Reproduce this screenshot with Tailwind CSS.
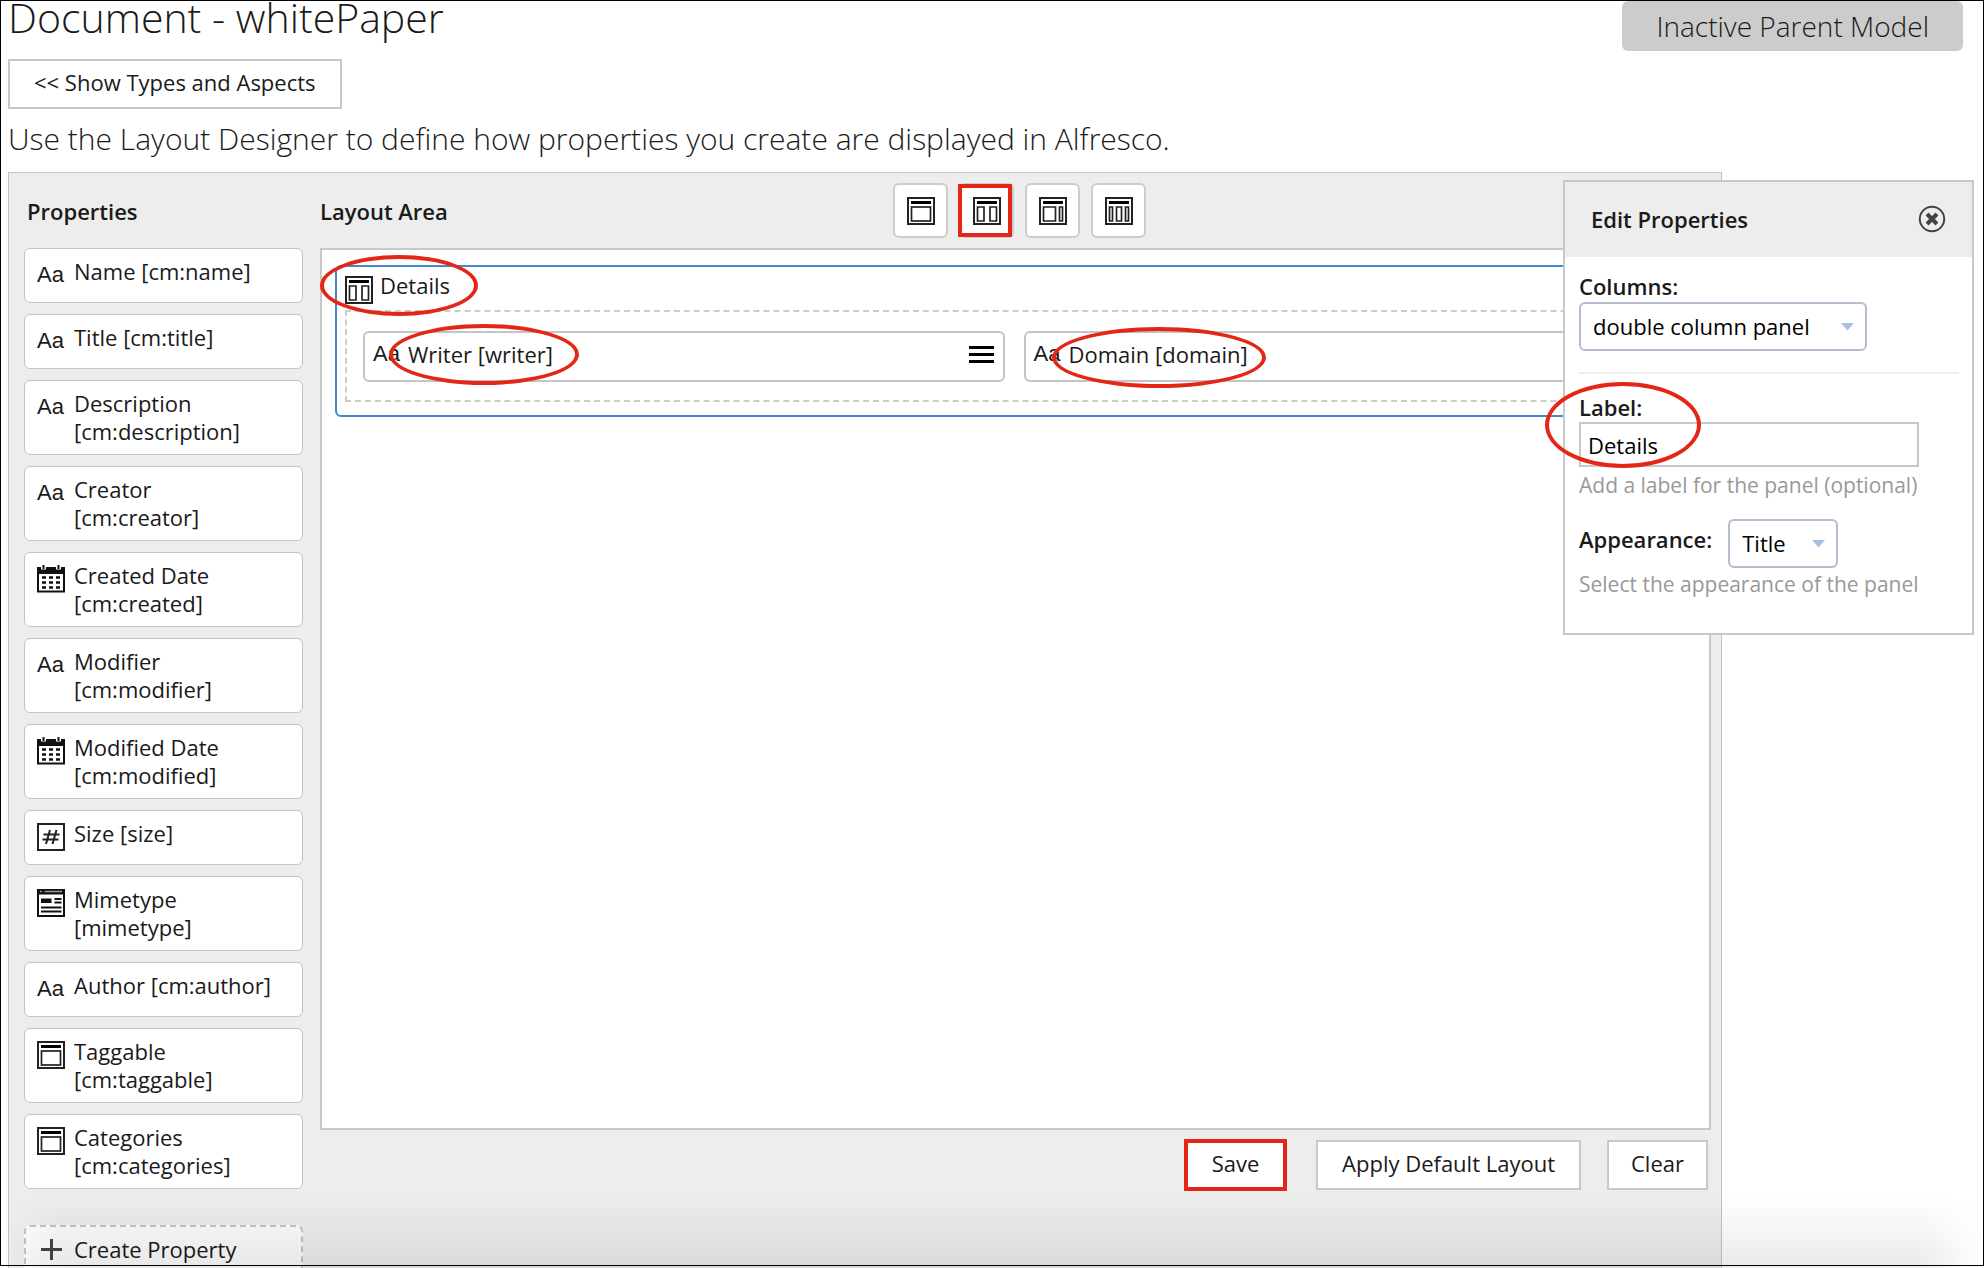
<!DOCTYPE html>
<html lang="en">
<head>
<meta charset="utf-8">
<title>Layout Designer</title>
<script src="https://cdn.jsdelivr.net/npm/@tailwindcss/browser@4"></script>
</head>
<body class="bg-white font-['Open_Sans',sans-serif] text-[22px] leading-7 text-[#1a1a1a]">

<svg class="hidden" aria-hidden="true">
  <symbol id="panel-frame" viewBox="0 0 28 28">
    <rect x="1" y="1" width="26" height="26" fill="#fff" stroke="#222" stroke-width="2"/>
    <path d="M4 5.500H24" stroke="#000" stroke-width="3"/>
  </symbol>
  <symbol id="single" viewBox="0 0 28 28">
    <use href="#panel-frame"/>
    <rect x="4.500" y="10" width="19" height="14" fill="none" stroke="#222" stroke-width="1.700"/>
  </symbol>
  <symbol id="double" viewBox="0 0 28 28">
    <use href="#panel-frame"/>
    <path d="M4.500 10h6.500v14H4.500zM17 10h6.500v14h-6.500z" fill="none" stroke="#222" stroke-width="1.700"/>
  </symbol>
  <symbol id="wide" viewBox="0 0 28 28">
    <use href="#panel-frame"/>
    <path d="M4.500 10h12v14H4.500zM20.500 10h3v14h-3z" fill="none" stroke="#222" stroke-width="1.700"/>
  </symbol>
  <symbol id="triple" viewBox="0 0 28 28">
    <use href="#panel-frame"/>
    <path d="M4.500 10h3v14h-3zM11.500 10h5v14h-5zM20.500 10h3v14h-3z" fill="none" stroke="#222" stroke-width="1.700"/>
  </symbol>
  <symbol id="calendar" viewBox="0 0 28 28">
    <path d="M1 3H27V26.500H1z" fill="#fff" stroke="#111" stroke-width="2"/>
    <path d="M0 2H28V9H0z" fill="#111"/>
    <path d="M4 0h5v4.500H4zM19 0h5v4.500h-5z" fill="#fff"/>
    <path d="M6.500 0V4M21.500 0V4" stroke="#111" stroke-width="2"/>
    <path d="M5 12.500H9M12 12.500h4M19 12.500h4M5 17.500H9M12 17.500h4M19 17.500h4M5 22.500H9M12 22.500h4M19 22.500h4" stroke="#111" stroke-width="2.500"/>
  </symbol>
  <symbol id="number" viewBox="0 0 28 28">
    <rect x="1" y="1" width="26" height="26" fill="#fff" stroke="#222" stroke-width="2"/>
    <path d="M13 7L9 21M19.500 7L15.500 21M6.500 11.500H22.500M5.500 16.500H21.500" stroke="#222" stroke-width="2" fill="none"/>
  </symbol>
  <symbol id="mime" viewBox="0 0 28 28">
    <rect x="1" y="1" width="26" height="26" fill="#fff" stroke="#111" stroke-width="2"/>
    <path d="M0 0H28V5.500H0z" fill="#111"/>
    <path d="M3 2.500H5M7.500 2.500H25" stroke="#999" stroke-width="1.500"/>
    <path d="M4 9.500H14.500V14H4z" fill="#111"/>
    <path d="M17.500 10H24.500M17.500 13.500H24.500M4 18.500H24.500M4 22.500H24.500" stroke="#111" stroke-width="2"/>
  </symbol>
</svg>

<div class="relative h-screen overflow-hidden pt-px pl-2">

  <header class="flex items-start justify-between pr-[21px]">
    <h1 class="text-[41px] leading-8 font-light">Document - whitePaper</h1>
    <div class="rounded-md bg-[#ccc] px-[34px] py-1 text-[28px] leading-[42px] font-light">Inactive Parent Model</div>
  </header>

  <button class="mt-2 block h-[50px] border-2 border-[#c8c8c8] bg-white px-6 pb-1">&lt;&lt; Show Types and Aspects</button>
  <p class="mt-2.5 text-[30px] leading-10 font-light">Use the Layout Designer to define how properties you create are displayed in Alfresco.</p>

  <main class="mt-[13px] mr-[262px] flex h-[1200px] gap-[17px] border border-[#c4c4c4] bg-[#ededed] pr-2.5 pl-[15px]">
    <section class="w-[279px] shrink-0">
      <h2 class="flex h-[75px] items-center pl-[3px] font-semibold">Properties</h2>
      <ul class="flex flex-col gap-[11px]">
        <li class="flex min-h-[55px] gap-[9px] rounded-md border border-[#c4c4c4] bg-white py-2 pl-3"><span class="mt-1 w-7 shrink-0 font-['Liberation_Sans',sans-serif]">Aa</span><span>Name [cm:name]</span></li>
        <li class="flex min-h-[55px] gap-[9px] rounded-md border border-[#c4c4c4] bg-white py-2 pl-3"><span class="mt-1 w-7 shrink-0 font-['Liberation_Sans',sans-serif]">Aa</span><span>Title [cm:title]</span></li>
        <li class="flex min-h-[75px] gap-[9px] rounded-md border border-[#c4c4c4] bg-white py-2 pl-3"><span class="mt-1 w-7 shrink-0 font-['Liberation_Sans',sans-serif]">Aa</span><span>Description<br>[cm:description]</span></li>
        <li class="flex min-h-[75px] gap-[9px] rounded-md border border-[#c4c4c4] bg-white py-2 pl-3"><span class="mt-1 w-7 shrink-0 font-['Liberation_Sans',sans-serif]">Aa</span><span>Creator<br>[cm:creator]</span></li>
        <li class="flex min-h-[75px] gap-[9px] rounded-md border border-[#c4c4c4] bg-white py-2 pl-3"><svg class="mt-1 size-7 shrink-0"><use href="#calendar"/></svg><span>Created Date<br>[cm:created]</span></li>
        <li class="flex min-h-[75px] gap-[9px] rounded-md border border-[#c4c4c4] bg-white py-2 pl-3"><span class="mt-1 w-7 shrink-0 font-['Liberation_Sans',sans-serif]">Aa</span><span>Modifier<br>[cm:modifier]</span></li>
        <li class="flex min-h-[75px] gap-[9px] rounded-md border border-[#c4c4c4] bg-white py-2 pl-3"><svg class="mt-1 size-7 shrink-0"><use href="#calendar"/></svg><span>Modified Date<br>[cm:modified]</span></li>
        <li class="flex min-h-[55px] gap-[9px] rounded-md border border-[#c4c4c4] bg-white py-2 pl-3"><svg class="mt-1 size-7 shrink-0"><use href="#number"/></svg><span>Size [size]</span></li>
        <li class="flex min-h-[75px] gap-[9px] rounded-md border border-[#c4c4c4] bg-white py-2 pl-3"><svg class="mt-1 size-7 shrink-0"><use href="#mime"/></svg><span>Mimetype<br>[mimetype]</span></li>
        <li class="flex min-h-[55px] gap-[9px] rounded-md border border-[#c4c4c4] bg-white py-2 pl-3"><span class="mt-1 w-7 shrink-0 font-['Liberation_Sans',sans-serif]">Aa</span><span>Author [cm:author]</span></li>
        <li class="flex min-h-[75px] gap-[9px] rounded-md border border-[#c4c4c4] bg-white py-2 pl-3"><svg class="mt-1 size-7 shrink-0"><use href="#single"/></svg><span>Taggable<br>[cm:taggable]</span></li>
        <li class="flex min-h-[75px] gap-[9px] rounded-md border border-[#c4c4c4] bg-white py-2 pl-3"><svg class="mt-1 size-7 shrink-0"><use href="#single"/></svg><span>Categories<br>[cm:categories]</span></li>
      </ul>
      <button class="mt-9 flex h-[55px] w-full gap-[9px] rounded-md border-2 border-dashed border-[#c4c4c4] bg-[#fcfcfc] pt-2 pl-[11px] text-left">
        <svg class="size-7 shrink-0" viewBox="0 0 28 28"><path d="M4 14.500H25M14.500 4V25" stroke="#444" stroke-width="3"/></svg>Create Property
      </button>
    </section>

    <section class="min-w-0 flex-1">
      <div class="flex h-[75px] items-center">
        <h2 class="w-[573px] font-semibold">Layout Area</h2>
        <div class="flex gap-[11px]">
          <button aria-label="Single column" class="grid size-[55px] place-items-center rounded-md border-2 border-[#ccc] bg-white"><svg class="size-7"><use href="#single"/></svg></button>
          <button aria-label="Double column" class="relative grid size-[55px] place-items-center rounded-md border-2 border-[#ccc] bg-white"><svg class="size-7"><use href="#double"/></svg><span class="absolute -inset-y-px right-0 -left-[3px] border-4 border-[#e42616]"></span></button>
          <button aria-label="Wide and narrow column" class="grid size-[55px] place-items-center rounded-md border-2 border-[#ccc] bg-white"><svg class="size-7"><use href="#wide"/></svg></button>
          <button aria-label="Triple column" class="grid size-[55px] place-items-center rounded-md border-2 border-[#ccc] bg-white"><svg class="size-7"><use href="#triple"/></svg></button>
        </div>
      </div>

      <div class="h-[882px] border-2 border-[#c8c8c8] bg-white px-[13px] pt-[15px]">
        <div class="h-[152px] rounded-md border-2 border-[#428bca] px-2 pt-2">
          <div class="relative flex h-[35px] items-start gap-[7px]">
            <svg class="mt-px size-7"><use href="#double"/></svg><span class="-mt-1">Details</span>
            <span class="absolute -top-5 -left-[25px] h-[61px] w-[158px] rounded-[50%] border-4 border-[#e42616]"></span>
          </div>
          <div class="flex h-[92px] gap-[19px] border-2 border-dashed border-[#ccc] py-[19px] pr-[19px] pl-4">
            <div class="relative flex h-[51px] flex-1 items-start gap-[7px] rounded-md border-2 border-[#c4c4c4] px-2 pt-[7px]">
              <span class="w-7 font-['Liberation_Sans',sans-serif]">Aa</span><span>Writer [writer]</span>
              <svg class="mt-1 mr-px ml-auto h-5 w-[25px]" viewBox="0 0 25 20"><path d="M0 3.500H25M0 10.500H25M0 17.500H25" stroke="#000" stroke-width="3"/></svg>
              <span class="absolute -top-[9px] left-6 h-[61px] w-[190px] rounded-[50%] border-4 border-[#e42616]"></span>
            </div>
            <div class="relative flex h-[51px] flex-1 items-start gap-[7px] rounded-md border-2 border-[#c4c4c4] px-2 pt-[7px]">
              <span class="w-7 font-['Liberation_Sans',sans-serif]">Aa</span><span>Domain [domain]</span>
              <span class="absolute -top-[6px] left-[26px] h-[61px] w-[214px] rounded-[50%] border-4 border-[#e42616]"></span>
            </div>
          </div>
        </div>
      </div>

      <div class="mt-2.5 flex justify-end pr-[3px]">
        <button class="relative mr-[30px] h-[50px] w-[101px] border-2 border-[#c8c8c8] bg-white pb-1">Save<span class="absolute -inset-[3px] border-4 border-[#e42616]"></span></button>
        <button class="mr-[26px] h-[50px] border-2 border-[#c8c8c8] bg-white px-6 pb-1">Apply Default Layout</button>
        <button class="h-[50px] border-2 border-[#c8c8c8] bg-white px-[22px] pb-1">Clear</button>
      </div>
    </section>
  </main>

  <aside class="absolute top-[180px] right-[10px] h-[455px] w-[411px] border-2 border-[#c8c8c8] bg-white">
    <header class="flex h-[75px] items-center justify-between bg-[#ededed] pr-[26px] pb-px pl-[26px]">
      <h2 class="font-semibold">Edit Properties</h2>
      <button aria-label="Close"><svg class="size-7" viewBox="0 0 28 28"><circle cx="14" cy="14" r="12.200" fill="none" stroke="#444" stroke-width="2"/><path d="M9 9L19 19M19 9L9 19" stroke="#444" stroke-width="4"/></svg></button>
    </header>
    <form class="pt-[15px] pr-[13px] pl-3.5">
      <label for="columns" class="block font-semibold">Columns:</label>
      <div class="relative mt-0.5 w-[288px]">
        <select id="columns" class="h-[49px] w-full appearance-none rounded-md border-2 border-[#b4bccd] bg-white pb-0.5 pl-3 text-black"><option>double column panel</option></select>
        <svg class="pointer-events-none absolute top-[21px] right-[13px] h-2 w-[13px]" viewBox="0 0 13 8"><path d="M0 0H13L6.500 7.500z" fill="#a9bfe3"/></svg>
      </div>
      <hr class="mt-[21px] border-t-2 border-[#ededed]">
      <div class="relative mt-[19px]">
        <label for="label" class="block font-semibold">Label:</label>
        <input id="label" value="Details" class="mt-px block h-[45px] w-[340px] border-2 border-[#c8c8c8] pl-[7px] text-black">
        <span class="absolute -top-[11px] -left-[34px] h-[86px] w-[156px] rounded-[50%] border-4 border-[#e42616]"></span>
      </div>
      <p class="mt-1 text-[21px] text-[#999]">Add a label for the panel (optional)</p>
      <div class="mt-5 flex gap-4">
        <label for="appearance" class="mt-1.5 font-semibold">Appearance:</label>
        <div class="relative w-[110px]">
          <select id="appearance" class="h-[49px] w-full appearance-none rounded-md border-2 border-[#b4bccd] bg-white pb-0.5 pl-3 text-black"><option>Title</option></select>
          <svg class="pointer-events-none absolute top-[21px] right-[13px] h-2 w-[13px]" viewBox="0 0 13 8"><path d="M0 0H13L6.500 7.500z" fill="#a9bfe3"/></svg>
        </div>
      </div>
      <p class="mt-0.5 text-[21px] text-[#999]">Select the appearance of the panel</p>
    </form>
  </aside>

  <div class="pointer-events-none absolute inset-x-0 bottom-0 h-[72px] bg-linear-to-b from-transparent to-black/8 mask-x-from-97% mask-x-to-100%"></div>
  <div class="pointer-events-none absolute inset-x-0 top-0 bottom-0.5 border border-black"></div>
</div>
</body>
</html>
